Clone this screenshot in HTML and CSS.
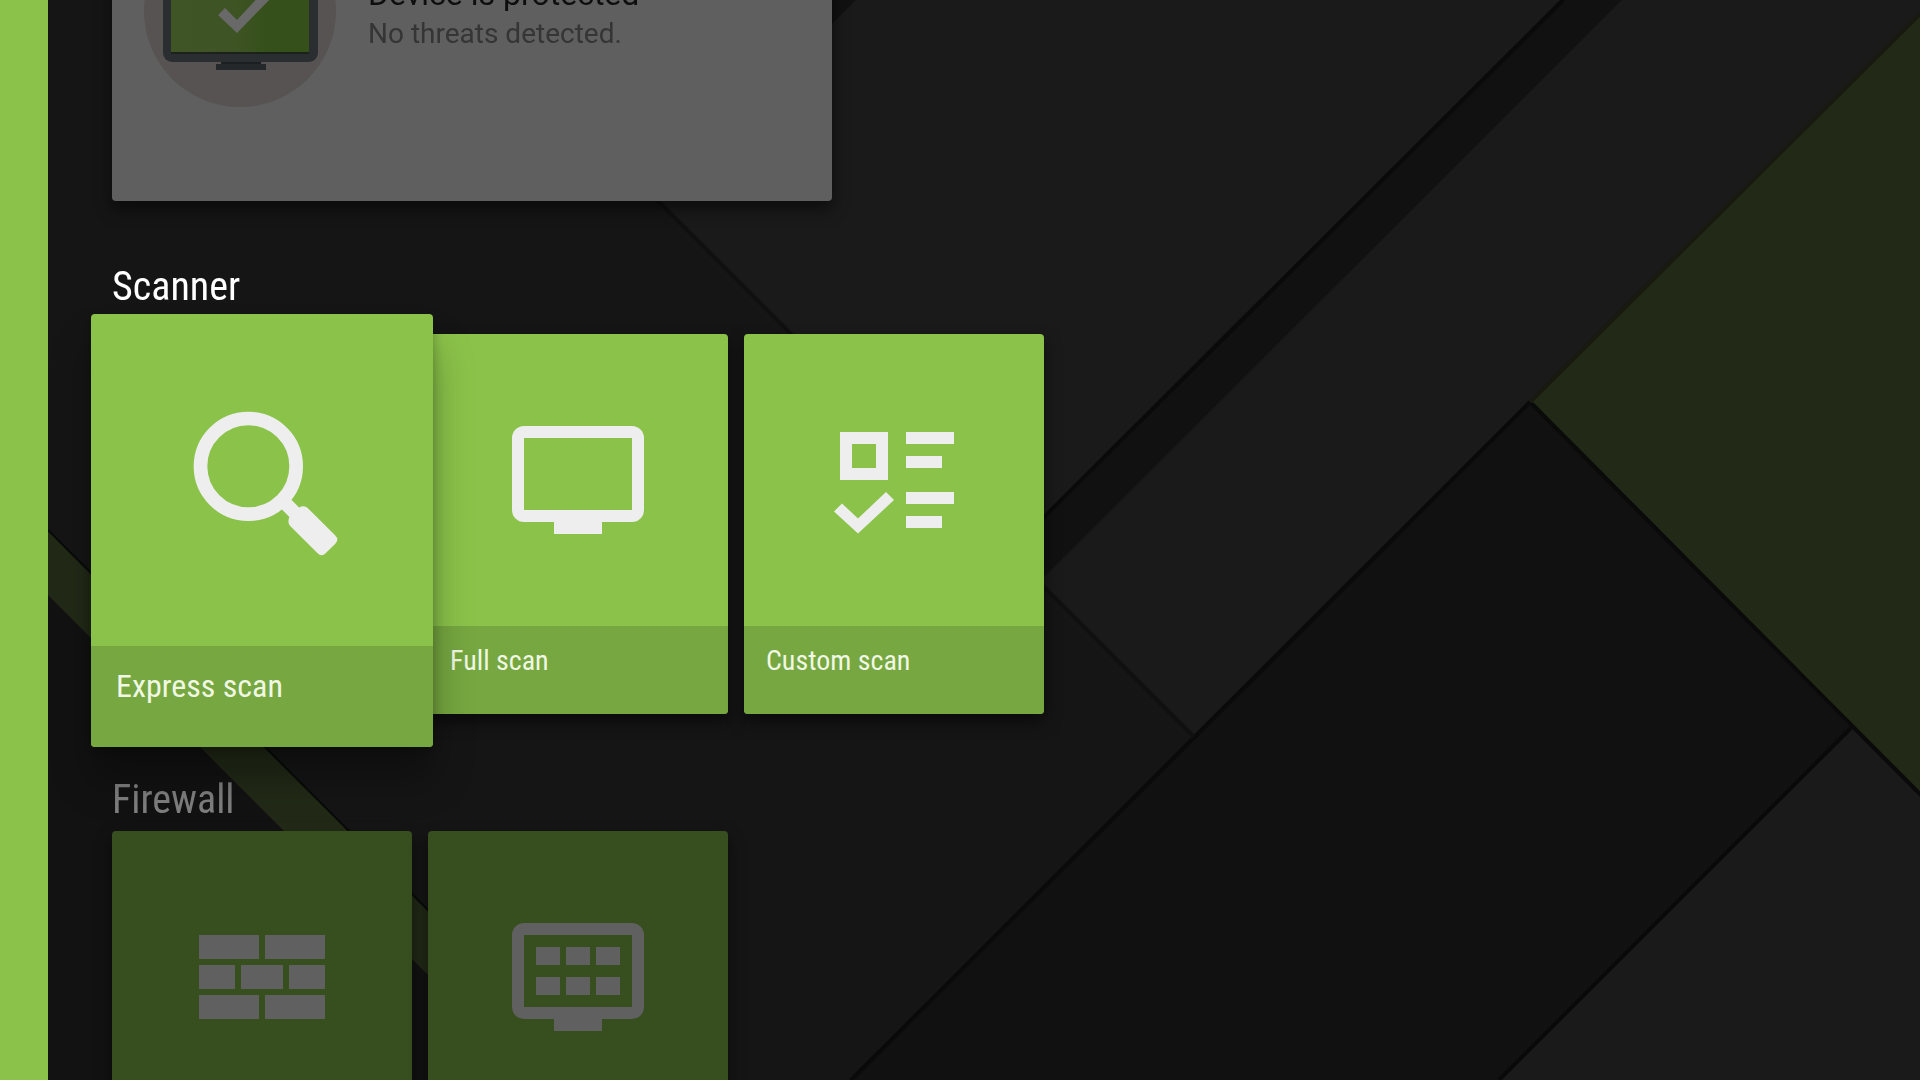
FILE: index.html
```html
<!DOCTYPE html>
<html lang="en">
<head>
    <meta charset="UTF-8">
    <meta name="viewport" content="width=device-width, initial-scale=1.0">
    <title>Scanner</title>
    <link rel="stylesheet" href="styles.css">
</head>
<body>
    <!-- Wallpaper -->
    <svg class="wallpaper" viewBox="0 0 1920 1080" preserveAspectRatio="xMidYMid slice" aria-hidden="true">
        <rect width="1920" height="1080" fill="#151515"/>
        <polygon points="457,0 1560,0 1044,516 1044,587" fill="#1a1a1a"/>
        <polygon points="400,0 856,0 656,200 600,200" fill="#111111"/>
        <polygon points="1562,0 1622,0 1040,580 1010,550" fill="#111111"/>
        <polygon points="1622,0 1920,0 1920,14 1194,738 1040,582" fill="#1a1a1a"/>
        <polygon points="1530,402 1851,728 1499,1080 850,1080" fill="#111111"/>
        <polygon points="1920,14 1530,402 1920,794" fill="#222a17"/>
        <polygon points="1851,728 1920,797 1920,1080 1499,1080" fill="#1a1a1a"/>
        <polygon points="48,595 533,1080 48,1080" fill="#121212"/>
        <polygon points="48,531 597,1080 533,1080 48,595" fill="#222a17"/>
        <g fill="none" stroke="#0a0a0a" stroke-width="4">
            <path d="M1563 0 1010 551"/>
            <path d="M1530 402 851 1080"/>
            <path d="M1530 402 1922 796"/>
            <path d="M1851 728 1499 1080"/>
            <path d="M457 0 1194 737" stroke="#101010"/>
            <path d="M1530 402 1922 12" stroke="#18190f"/>
            <path d="M48 530 598 1080" stroke-width="2"/>
        </g>
    </svg>

    <main class="browse">
        <section class="status">
            <svg class="status-icon" viewBox="0 0 192 192" aria-hidden="true">
                <defs>
                    <linearGradient id="screenShade" x1="0" y1="0" x2="1" y2="0">
                        <stop offset="0" stop-color="#3f5526"/>
                        <stop offset="0.450" stop-color="#3e5424"/>
                        <stop offset="0.700" stop-color="#35501a"/>
                        <stop offset="1" stop-color="#355019"/>
                    </linearGradient>
                </defs>
                <circle cx="96" cy="96" r="96" fill="#585353"/>
                <rect x="19" y="40" width="155" height="107" rx="9" fill="#2b2e31"/>
                <rect x="27" y="48" width="138" height="90" fill="url(#screenShade)"/>
                <rect x="27" y="137" width="138" height="2" fill="#1c211c"/>
                <rect x="77" y="147" width="40" height="3" fill="#1c1f21"/>
                <rect x="72" y="149" width="50" height="6" fill="#25282b"/>
                <polygon points="74,100 81,93 93,105 118,78 130,80 93,118" fill="#696969"/>
            </svg>
            <div class="status-text">
                <h1>Device is protected</h1>
                <p>No threats detected.</p>
            </div>
        </section>

        <section class="row active">
            <h2>Scanner</h2>
            <div class="cards">
                <button class="card focused" type="button">
                    <span class="card-image">
                        <svg viewBox="0 0 144 144" aria-hidden="true">
                            <circle cx="60" cy="60" r="42" fill="none" stroke="currentColor" stroke-width="12"/>
                            <path transform="rotate(45 60 60)" fill="currentColor" d="M104 54H117Q119 49 123 49H157Q162 49 162 54V66Q162 71 157 71H123Q119 71 117 66H104Z"/>
                        </svg>
                    </span>
                    <span class="card-label">Express scan</span>
                </button>
                <button class="card" type="button">
                    <span class="card-image">
                        <svg viewBox="0 0 144 144" fill="currentColor" aria-hidden="true">
                            <path fill-rule="evenodd" d="M18 18H126a12 12 0 0 1 12 12V102a12 12 0 0 1-12 12H96v12H48V114H18a12 12 0 0 1-12-12V30a12 12 0 0 1 12-12ZM18 30V102H126V30Z"/>
                        </svg>
                    </span>
                    <span class="card-label">Full scan</span>
                </button>
                <button class="card" type="button">
                    <span class="card-image">
                        <svg viewBox="0 0 144 144" fill="currentColor" aria-hidden="true">
                            <path fill-rule="evenodd" d="M18 24H66V72H18ZM30 36V60H54V36Z"/>
                            <path d="M84 24h48v12H84zM84 48h36v12H84zM84 84h48v12H84zM84 108h36v12H84z"/>
                            <path d="M12 103.500 20 95.500 36 110.500 64 84 72 92 36 125.500Z"/>
                        </svg>
                    </span>
                    <span class="card-label">Custom scan</span>
                </button>
            </div>
        </section>

        <section class="row">
            <h2 id="firewall">Firewall</h2>
            <div class="cards">
                <button class="card" type="button" aria-labelledby="firewall">
                    <span class="card-image">
                        <svg viewBox="0 0 144 144" fill="currentColor" aria-hidden="true">
                            <path d="M9 30h60v24H9zM75 30h60v24H75zM9 60h36v24H9zM51 60h42v24H51zM99 60h36v24H99zM9 90h60v24H9zM75 90h60v24H75z"/>
                        </svg>
                    </span>
                </button>
                <button class="card" type="button" aria-labelledby="firewall">
                    <span class="card-image">
                        <svg viewBox="0 0 144 144" fill="currentColor" aria-hidden="true">
                            <path fill-rule="evenodd" d="M18 18H126a12 12 0 0 1 12 12V102a12 12 0 0 1-12 12H96v12H48V114H18a12 12 0 0 1-12-12V30a12 12 0 0 1 12-12ZM18 30V102H126V30Z"/>
                            <path d="M30 42h24v18H30zM60 42h24v18H60zM90 42h24v18H90zM30 72h24v18H30zM60 72h24v18H60zM90 72h24v18H90z"/>
                        </svg>
                    </span>
                </button>
            </div>
        </section>
    </main>
</body>
</html>
```

FILE: styles.css
```css
* {
    margin: 0;
    padding: 0;
    box-sizing: border-box;
}

body {
    font-family: 'Roboto Condensed', Roboto, sans-serif;
    background: #151515;
    color: #fff;
    height: 100vh;
    overflow: hidden;
}

.wallpaper {
    position: fixed;
    inset: 0;
    width: 100%;
    height: 100%;
    z-index: -1;
}

.browse {
    height: 100vh;
    padding: 0 64px;
    border-left: 48px solid #8bc34a;
    overflow: hidden;
}

/* Status card, scrolled partly out of view */
.status {
    display: flex;
    align-items: center;
    gap: 32px;
    width: 720px;
    max-width: 100%;
    height: 380px;
    margin-top: -179px;
    padding: 0 32px;
    background: #5f5f5f;
    border-radius: 4px;
    box-shadow: 0 8px 16px rgba(0, 0, 0, 0.5);
}

.status-icon {
    width: 192px;
    height: 192px;
}

.status-text {
    font-family: Roboto, sans-serif;
    padding-top: 6px;
}

.status-text h1 {
    font-size: 32px;
    font-weight: 400;
    line-height: 40px;
    color: #0e0e0e;
}

.status-text p {
    font-size: 28px;
    line-height: 40px;
    color: #353535;
}

.row {
    margin-top: 62px;
}

.row h2 {
    font-size: 40px;
    font-weight: 400;
    line-height: 48px;
    margin-bottom: 7px;
    color: #7f7f7f;
}

.row.active h2 {
    margin-bottom: 23px;
    color: #fff;
}

.cards {
    display: flex;
    gap: 16px;
}

.card {
    display: flex;
    flex-direction: column;
    flex-shrink: 0;
    width: 300px;
    border: none;
    border-radius: 4px;
    overflow: hidden;
    background: #374e1f;
    color: #606060;
    font-family: inherit;
    font-size: 28px;
    text-align: left;
    box-shadow: 0 8px 16px rgba(0, 0, 0, 0.5);
    cursor: pointer;
}

.card-image {
    display: flex;
    align-items: center;
    justify-content: center;
    width: 100%;
    height: 292px;
}

.card-image svg {
    width: 144px;
    height: 144px;
}

.card-label {
    width: 100%;
    height: 88px;
    padding: 17px 22px;
    line-height: 36px;
    background: #76a740;
    color: #f0f8e4;
}

.active .card {
    background: #8bc34a;
    color: #eee;
}

/* Focused card grows over its neighbours */
.card.focused {
    position: relative;
    z-index: 1;
    width: 342px;
    margin: -20px -21px -33px;
    font-size: 32px;
    outline: none;
    box-shadow: 0 4px 12px rgba(0, 0, 0, 0.25), 0 32px 40px rgba(0, 0, 0, 0.3);
}

.focused .card-image {
    height: 332px;
}

.focused .card-image svg {
    width: 164px;
    height: 164px;
}

.focused .card-label {
    height: 101px;
    padding: 20px 25px;
    line-height: 40px;
}
```
